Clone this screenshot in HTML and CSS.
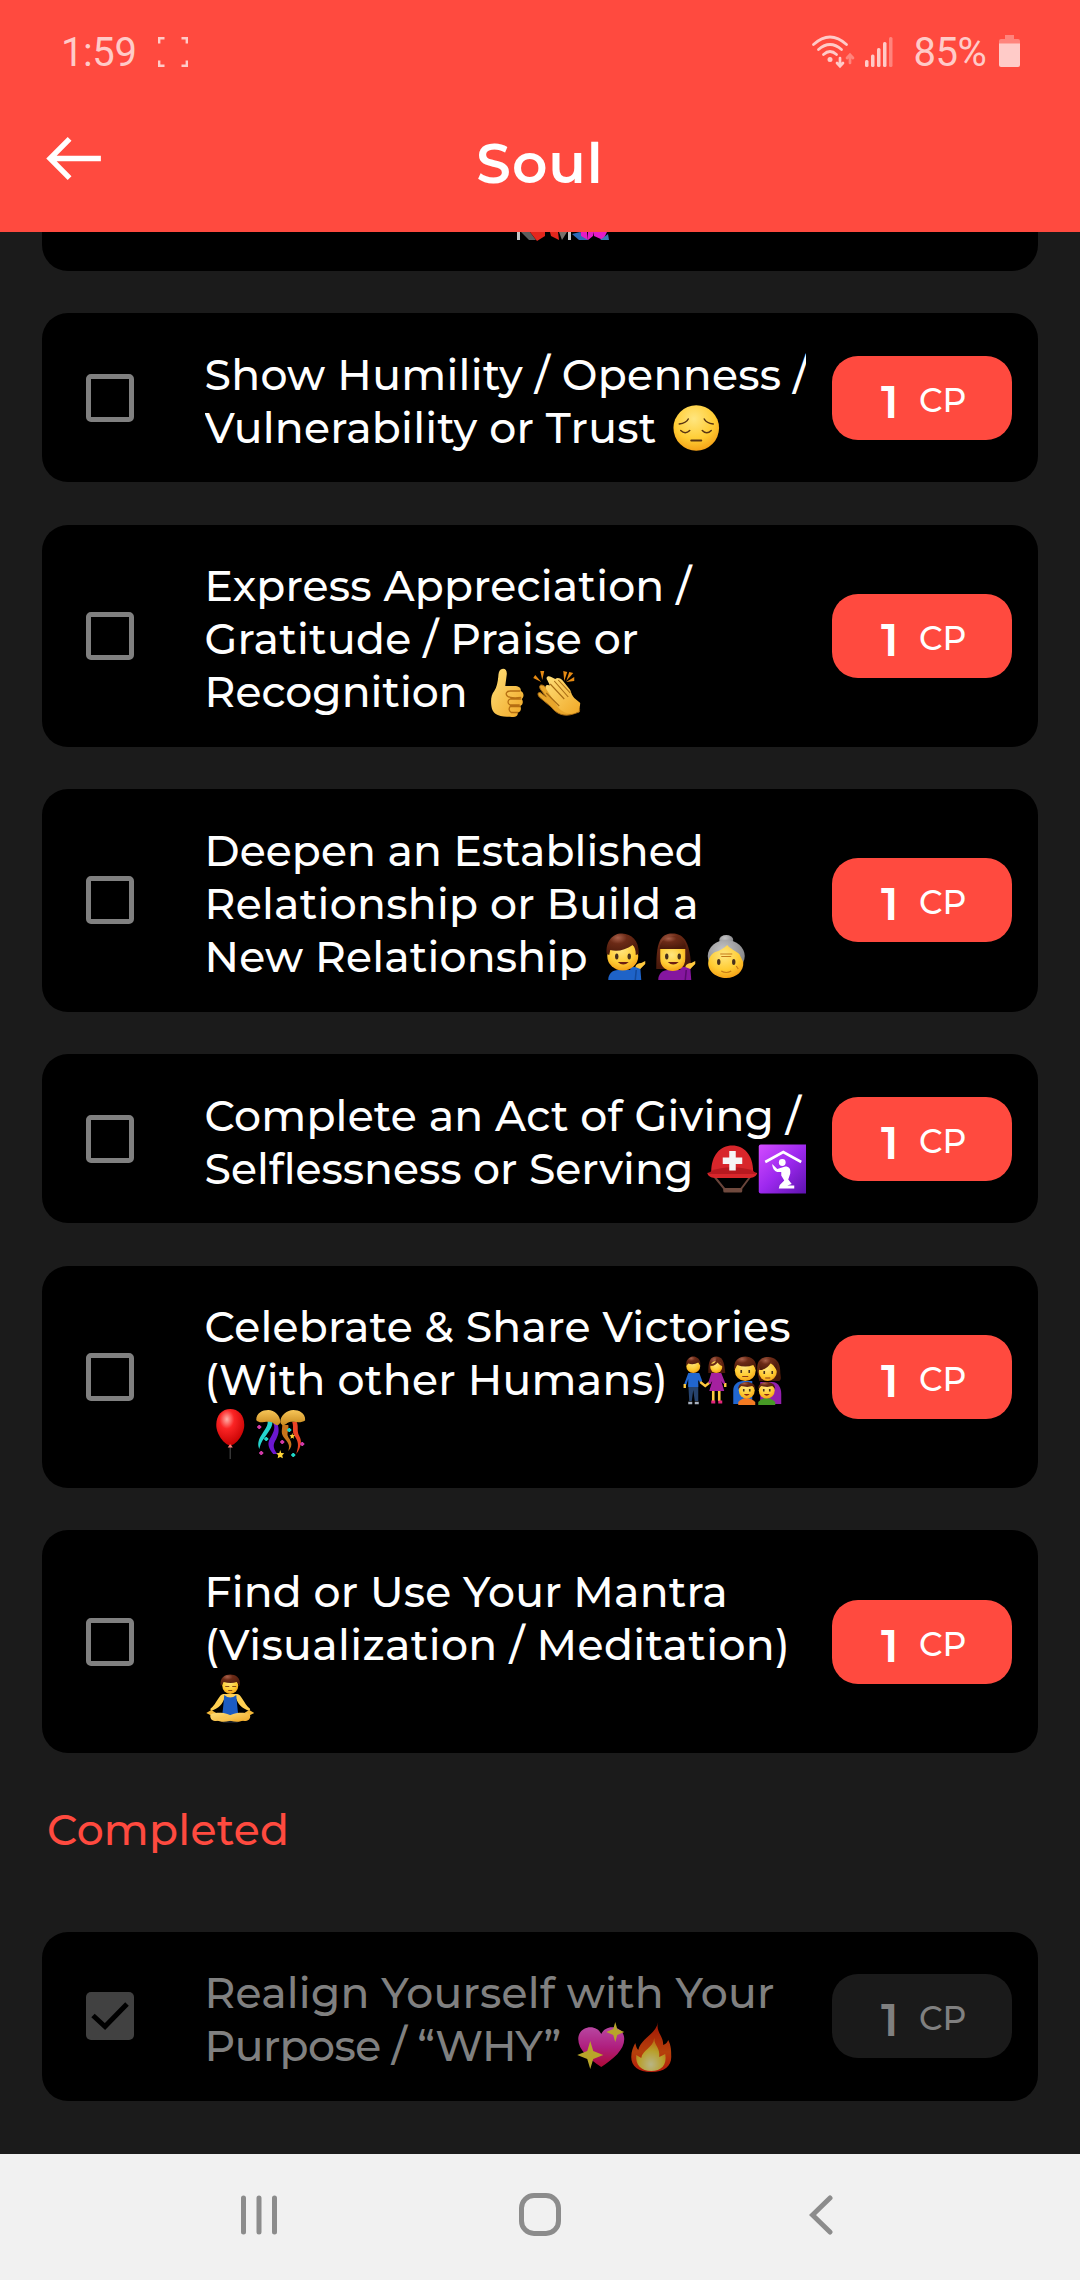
FILE: index.html
```html
<!DOCTYPE html>
<html lang="en">
<head>
<meta charset="utf-8">
<title>Soul</title>
<link rel="stylesheet" href="styles.css">
</head>
<body>
<svg class="defs" width="0" height="0" aria-hidden="true">
  <defs>
    <radialGradient id="skin" cx=".45" cy=".3" r=".75"><stop offset="0" stop-color="#ffe680"/><stop offset=".6" stop-color="#ffcc33"/><stop offset="1" stop-color="#f39a12"/></radialGradient>
    <linearGradient id="hand" x1="0" y1="0" x2="1" y2="1"><stop offset="0" stop-color="#ffdf7a"/><stop offset="1" stop-color="#f0a826"/></linearGradient>
    <radialGradient id="hair" cx=".35" cy=".2" r=".8"><stop offset="0" stop-color="#a9604a"/><stop offset=".35" stop-color="#6b2a16"/><stop offset="1" stop-color="#4a1a0b"/></radialGradient>
    <radialGradient id="gray" cx=".4" cy=".3" r=".8"><stop offset="0" stop-color="#c4c4c6"/><stop offset="1" stop-color="#77777a"/></radialGradient>
    <radialGradient id="balloon" cx=".38" cy=".28" r=".75"><stop offset="0" stop-color="#ffb0a8"/><stop offset=".35" stop-color="#fb2424"/><stop offset="1" stop-color="#c40000"/></radialGradient>
    <linearGradient id="purple" x1="0" y1="0" x2="1" y2="1"><stop offset="0" stop-color="#d34cff"/><stop offset=".5" stop-color="#9c28ee"/><stop offset="1" stop-color="#5b12ac"/></linearGradient>
    <linearGradient id="heart" x1="0" y1="0" x2="0" y2="1"><stop offset="0" stop-color="#ff62e0"/><stop offset=".5" stop-color="#f32bb0"/><stop offset="1" stop-color="#f00d4b"/></linearGradient>
    <linearGradient id="flame" x1="0" y1="0" x2="0" y2="1"><stop offset="0" stop-color="#e01c08"/><stop offset=".6" stop-color="#fb5a10"/><stop offset="1" stop-color="#ff2410"/></linearGradient>
    <radialGradient id="core" cx=".5" cy=".8" r=".7"><stop offset="0" stop-color="#fffbb8"/><stop offset=".6" stop-color="#ffdd3c"/><stop offset="1" stop-color="#ff9a1c"/></radialGradient>
    <linearGradient id="gold" x1="0" y1="0" x2="0" y2="1"><stop offset="0" stop-color="#f7c658"/><stop offset="1" stop-color="#c98a1e"/></linearGradient>
  </defs>

  <symbol id="e-pensive" viewBox="0 0 50 50">
    <circle cx="25" cy="25" r="22.8" fill="url(#skin)"/>
    <g fill="none" stroke="#5a3512" stroke-width="1.500" stroke-linecap="round"><path d="M8 21q7-1 9-5M42 21q-7-1-9-5M9.500 27.500q4.500 4.500 9 0M31 27.500q4.500 4.500 9 0"/><path d="M20 37.500h10" stroke-width="2"/></g>
  </symbol>

  <symbol id="e-thumb" viewBox="0 0 50 50">
    <path d="M18.500 1.500c4-2 6.500 1 6 5L23 18l9 0c5 0 7 2 6.500 5 3.500 1.500 3.500 6 1 8 2 2.500 1 6-1.500 7 1.500 3 .5 6-2.500 6.500.5 3.500-2 5-6 4.500-4-.5-10 0-14-2-4-1.500-6-5-6.500-10-.5-6 0-10 3-14 2.500-3.500 3.500-9 4-14 .3-3.500.5-6 2.500-7.500z" fill="url(#hand)"/>
    <path d="M38 23H28c-4 0-5 3-3 5s9 2 14 1.500M39 31H28c-3 1-3 5 0 6h9.500M38 38.500H28c-2 2-1 5 1 6h7" fill="none" stroke="#b56e12" stroke-width="1.300"/>
  </symbol>

  <symbol id="e-clap" viewBox="0 0 50 50">
    <g fill="#e68a13"><path d="M1 10l8 4-6-7zM8 3l2 9 2-9zM31 3l1 10 3-9zM37 4l-3 9 7-8zM42 9l-8 5 8-1z"/></g>
    <path d="M8 21c-2-4 1-5 4-3l7 6c-4-6-3-8 1-6l14 9 9 7c4 3 5 7 4 10l-6 2c-9 3-17 0-22-7L7 29c-3-4 0-6 3-3l4 3z" fill="#e9a62b" stroke="#a86c15" stroke-width="1"/>
    <path d="M15 12c-2-3 1-5 4-3l4 2c2-2 5-1 7 1l8 10c1 3 2 6 4 8l6 5c0 4-2 8-5 10-7 2-14-1-18-7L14 21c-2-4 1-5 4-3z" fill="url(#hand)"/>
    <path d="M18 16l14 15M22 13l14 16M26 12l12 13M14 25l13 13" fill="none" stroke="#a86c15" stroke-width="1.100"/>
  </symbol>

  <symbol id="e-man" viewBox="0 0 50 50">
    <path d="M6 48c0-6 4-10 10-10h12v-3h10l1 13z" fill="#1e63c8"/><path d="M34 38l-1 10" stroke="#134a9c" stroke-width="1.500"/>
    <ellipse cx="20.500" cy="24" rx="15.500" ry="14.500" fill="url(#skin)"/>
    <path d="M4.500 22C3 9 11 1 20 1.500S37 8 36.500 22l-3 1c0-5-1-8-3-10C23 18 15 20 8 18l-1 5z" fill="url(#hair)"/>
    <path d="M33 35c1-3 3-4 6-4l4-2v3l-5 5z" fill="#ffc93e"/>
    <ellipse cx="14.500" cy="24.500" rx="1.700" ry="3" fill="#47301c"/><ellipse cx="27" cy="24.500" rx="1.700" ry="3" fill="#47301c"/><path d="M15.500 30h11q-5.500 5-11 0z" fill="#6b1d12"/>
  </symbol>

  <symbol id="e-woman" viewBox="0 0 50 50">
    <path d="M4 37C4 12 7 1.500 20 1.500S38 12 39 37z" fill="url(#hair)"/>
    <path d="M6 48c0-6 4-10 10-10h12v-3h10l1 13z" fill="#85169f"/><path d="M34 38l-1 10" stroke="#5b0b70" stroke-width="1.500"/>
    <path d="M8 16h25v11c0 8-6 12-12.500 12S8 35 8 27z" fill="url(#skin)"/>
    <path d="M7 17C8 8 14 4 21 4s13 5 13 13z" fill="url(#hair)"/>
    <path d="M33 35c1-3 3-4 6-4l4-2v3l-5 5z" fill="#ffc93e"/>
    <ellipse cx="14.500" cy="24.500" rx="1.700" ry="3" fill="#47301c"/><ellipse cx="27" cy="24.500" rx="1.700" ry="3" fill="#47301c"/><path d="M15.500 30h11q-5.500 5-11 0z" fill="#6b1d12"/>
  </symbol>

  <symbol id="e-granny" viewBox="0 0 50 50">
    <ellipse cx="23" cy="8" rx="7" ry="5" fill="url(#gray)"/>
    <ellipse cx="23" cy="24" rx="18.500" ry="16" fill="url(#gray)"/>
    <path d="M5 30C6 25 8 22 12 20c4-1 9-4 12-7 3 4 9 6 12 9l4 8c1 9-7 16-17 16S4 39 5 30z" fill="url(#skin)"/>
    <ellipse cx="15.500" cy="30" rx="1.700" ry="3" fill="#47301c"/><ellipse cx="30.500" cy="30" rx="1.700" ry="3" fill="#47301c"/><path d="M18 39q5 3 10 0M17 22h12M18 24.500h10M33 34l2 3" fill="none" stroke="#c67b18" stroke-width="1.200"/>
  </symbol>

  <symbol id="e-helmet" viewBox="0 0 50 50">
    <path d="M5 30l13 16h15l12-16" fill="none" stroke="#69443a" stroke-width="2"/><rect x="16" y="44" width="19" height="4.500" rx="1.500" fill="#704a3e"/>
    <path d="M4 28C4 11 13 1.500 25 1.500S46 11 46 28l4 1c-1 4-5 5-9 5H9c-4 0-8-1-9-5z" fill="#d8262b"/><path d="M4 27c12-5 30-5 42 0l3 3H1z" fill="#b8191f"/>
    <path d="M22 7h6.500v6.500H35V20h-6.500v6.500H22V20h-6.500v-6.500H22z" fill="#f5f5f5"/>
  </symbol>

  <symbol id="e-worship" viewBox="0 0 50 50">
    <rect x=".5" y=".5" width="49" height="49" rx="2" fill="url(#purple)"/>
    <path d="M7 18L25 8l18 10" fill="none" stroke="#fff" stroke-width="2.600"/><circle cx="24" cy="18.500" r="3.400" fill="#fff"/>
    <path d="M14 20l5 5 8-2.500c4 0 5.500 2 5 7l-2 6 3.500 4.500-4.500 1.500 7 0v3H20.500l1-3.500 4.500-4.500-3-5 0-3.500-4 0c-3-1-5-4-5-8z" fill="#fff"/>
  </symbol>

  <symbol id="e-couple" viewBox="0 0 50 50">
    <path d="M6 28h10v17h-3.500l-1.500-11-1.500 11H7z" fill="#26436d"/><path d="M6 17h11l3 8-2 2-2-3v7H6v-8l-2 6-2-1z" fill="#2166cf"/><path d="M18 26l5 4 5-4" fill="none" stroke="#ffc93e" stroke-width="2.400"/>
    <path d="M2.500 28v4M43 27v4" stroke="#ffc93e" stroke-width="2.400"/>
    <circle cx="11" cy="10" r="7" fill="url(#skin)"/><path d="M4 10C3 3 8 .5 11 .5s8 2.500 7 9l-2-3q-5 3-10 1z" fill="url(#hair)"/>
    <path d="M26 17C26 5 28 .5 34 .5S42 5 43 17z" fill="url(#hair)"/><circle cx="34" cy="11" r="6" fill="url(#skin)"/><path d="M28 9q6 0 7-5 2 4 5 5" fill="none" stroke="#6b2a16" stroke-width="2"/>
    <path d="M29 17h10l4 10-2 1-2-3 3 10H27l3-10-2 3-2-1z" fill="#a5209f"/><path d="M31 35v10M37 35v10" stroke="#ffc93e" stroke-width="2.600"/><path d="M29 46h4M36 46h4" stroke="#e4257b" stroke-width="3"/>
    <path d="M6 47h4M12.500 47h4" stroke="#a9b2c0" stroke-width="2.500"/>
  </symbol>

  <symbol id="e-family" viewBox="0 0 50 50">
    <path d="M1 48V34c0-5 4-9 10-9h9v23z" fill="#2166cf"/><path d="M28 26h12c6 0 9 6 9 12v10H28z" fill="#941fae"/>
    <path d="M25 15C24 5 29 1 36 1s12 5 12 14c0 5 2 8-1 10H27z" fill="url(#hair)"/>
    <circle cx="13" cy="14.500" r="10.500" fill="url(#skin)"/><path d="M2 14C1 4 7 .5 13 .5S25 4 24 14l-3-5q-8 3-16 0z" fill="url(#hair)"/>
    <circle cx="35.500" cy="16" r="9" fill="url(#skin)"/><path d="M27 14q8 0 12-8l6 9V6L36 2l-9 4z" fill="url(#hair)"/>
    <path d="M6 49v-3q8-8 17 0v3z" fill="#f47b22"/><path d="M26 49v-3q8-8 17 0v3z" fill="#469a25"/>
    <circle cx="14.500" cy="34.500" r="8" fill="url(#skin)"/><circle cx="34.500" cy="34.500" r="8" fill="url(#skin)"/>
    <path d="M6 33c0-5 4-7 8.500-7s8.500 2 8.500 7l-3-3-5 1-6-1z" fill="url(#hair)"/><path d="M26 33c0-5 4-7 8.500-7s8.500 2 8.500 7l-3-3-5 1-6-1z" fill="url(#hair)"/>
    <path d="M11.500 38q3 3.500 6 0zM31.500 38q3 3.500 6 0z" fill="#8c2513"/>
    <path d="M9 14v3M17 14v3M32 15v3M40 15v3M11.500 33v2.500M17.500 33v2.500M31.500 33v2.500M37.500 33v2.500" stroke="#47301c" stroke-width="1.600"/><path d="M10 20.500h6M33 22h5" stroke="#8b3a17" stroke-width="1.200"/>
  </symbol>

  <symbol id="e-balloon" viewBox="0 0 50 50">
    <path d="M25 37v13" stroke="#353535" stroke-width="1.500"/><path d="M11 16C11 6 17 0 25 0s14 6 14 16c0 9-8 20-14 20.500C19 36 11 25 11 16z" fill="url(#balloon)"/><path d="M22.500 38.500l2-3h1l2 3z" fill="#ff7c78"/>
  </symbol>

  <symbol id="e-confetti" viewBox="0 0 50 50">
    <path d="M12 11c2 5-3 10-7 17-3 6-2 9-1 12 1-4 2-7 5-11 5-7 9-12 8-17z" fill="#25d4ce"/>
    <path d="M18 14c3 6-1 11-4 17-2 5 0 9 4 14h4c-5-7-4-10-1-15 3-6 3-10 1-16z" fill="#6b17cf"/>
    <path d="M27 16c0 5-2 8 2 13 4 5 6 7 4 13 6-6 2-11 0-14-2-4 1-7 0-12z" fill="#c7741a"/>
    <path d="M37 13c2 6-1 10 3 15 4 6 3 10 1 17 5-7 6-13 3-18-3-6 0-9-3-15z" fill="#ec4324"/>
    <path d="M1 11C1 4 7 1 13 1s12 5 12 12c-1 4-4 4-7 1-4-3-11 0-14-1q-3-1-3-2z" fill="url(#gold)"/><path d="M50 11C50 4 44 1 38 1S25 6 25 13c1 4 4 4 7 1 4-3 11 0 14-1q4-1 4-2z" fill="url(#gold)"/>
    <path d="M11 28v4M9 30h4M34 19v4M32 21h4M38 44v4M36 46h4" stroke="#1fd5c6" stroke-width="2"/><path d="M4 16v4M2 18h4M6 42v4M4 44h4M47 33v4M45 35h4M27 31v4M25 33h4" stroke="#d23aa8" stroke-width="2"/>
    <path d="M25 41l1 3 3 .3-2 2 .6 3-2.600-1.400-2.600 1.400.6-3-2-2 3-.3zM37 24l.7 2 2 .2-1.400 1.500.4 2-1.700-1-1.700 1 .4-2-1.400-1.500 2-.2z" fill="#ffd638"/>
  </symbol>

  <symbol id="e-lotus" viewBox="0 0 50 50">
    <path d="M16 47l9-5 9 5-2 2H18z" fill="#161c25"/><path d="M18 20h14c4 0 6 9 13 15l-1 2c-8-3-11-7-13-12H19C17 30 14 34 6 37l-1-2c7-6 9-15 13-15z" fill="#ffd052"/>
    <path d="M19 21q6 5 12 0l1 11 1 9H17l1-9z" fill="#1c5cc2"/>
    <path d="M1 39l5-3 5 3-5 2.500zM39 39l5-3 5 3-5 2.500z" fill="#f5b93a"/><path d="M5 42c0-4 12-4 17-2 4 1 6 3 9 4l8 2c-5 3-13 2-18-1l-10 2c-4 0-6-2-6-5z" fill="url(#hand)"/><path d="M45 42c0-4-12-4-17-2-4 1-6 3-9 4l-8 2c5 3 13 2 18-1l10 2c4 0 6-2 6-5z" fill="url(#hand)"/>
    <ellipse cx="25" cy="11.500" rx="8" ry="8.500" fill="url(#skin)"/><path d="M15.500 12C14 3 20 .5 25 .5S36 3 34.500 12l-3-4q-6 2-13 0z" fill="url(#hair)"/><path d="M20 12.500h4M27 12.500h4M23 16.500h4" stroke="#8b4a17" stroke-width="1"/>
  </symbol>

  <symbol id="e-heart" viewBox="0 0 50 50">
    <path d="M26 45C14 37 3 28 3 17 3 4 21 1 26 12 31 1 49 4 49 17c0 11-11 20-23 28z" fill="url(#heart)"/><path d="M15 19l3 10 10 4-10 4-3 10-3-10-10-4 10-4zM40 0l2 7 7 3-7 3-2 7-2-7-7-3 7-3z" fill="#ffe53b"/>
  </symbol>

  <symbol id="e-fire" viewBox="0 0 50 50">
    <path d="M33 0c-3 10 5 13 5 23 3-1 4-3 5-5 3 6 3 11 3 17 0 9-7 15-20 15S6 44 6 35c0-6 2-10 4-14 1 3 1 5 3 7C16 16 30 13 33 0z" fill="url(#flame)"/><path d="M29 16c0 8 6 9 5 19l6-3c2 11-4 17-14 17S10 43 11 33l5 3c1-8 12-10 13-20z" fill="url(#core)"/>
  </symbol>
</svg>

<div class="screen">
  <header class="header">
    <div class="status">
      <div class="status-group">
        <span class="status-text">1:59</span>
        <svg class="ic-scan" viewBox="0 0 30 30" fill="none" stroke="currentColor" stroke-width="2.400"><path d="M1.200 6.500V1.200h5.300M23.500 1.200h5.300v5.300M28.800 23.500v5.300h-5.300M6.500 28.800H1.200v-5.300"/></svg>
      </div>
      <div class="status-group">
        <svg class="ic-wifi" viewBox="0 0 43 34" fill="none" stroke="currentColor" stroke-width="2.700" stroke-linecap="round"><path d="M1.500 9.500q16.500-15 33 0M6.500 14.500q11.500-10 23 0M11.500 19.500q6.500-6 13 0"/><circle cx="18" cy="24.500" r="2.500" fill="currentColor" stroke="none"/><path d="M28 23v8M25 28l3 3.200 3-3.200"/><path class="dim" d="M38 28v-7M35 23l3-3.200 3 3.200"/></svg>
        <svg class="ic-signal" viewBox="0 0 28 30" fill="currentColor"><rect x="0" y="23" width="3.500" height="7" rx="1.500"/><rect x="6" y="17.500" width="3.500" height="12.500" rx="1.500"/><rect x="12" y="11" width="3.500" height="19" rx="1.500"/><rect x="18" y="5" width="3.500" height="25" rx="1.500"/><rect class="dim" x="24" y="0" width="3.500" height="30" rx="1.500"/></svg>
        <span class="status-text">85%</span>
        <svg class="ic-battery" viewBox="0 0 21 32" fill="currentColor"><path class="dim" d="M6 0h9v4h4q2 0 2 2v3H0V6q0-2 2-2h4z"/><path d="M0 8.500h21V30q0 2-2 2H2q-2 0-2-2z"/></svg>
      </div>
    </div>
    <div class="titlebar">
      <svg class="ic-back" viewBox="0 0 56 44" fill="none" stroke="#fff" stroke-width="5.500"><path d="M24 2L4 22l20 20M4 22h52"/></svg>
      <h1 class="title">Soul</h1>
    </div>
  </header>

  <main class="list">
    <section class="card card-cut">
      <svg class="boots" viewBox="0 0 94 9"><path d="M0 0h3v8H0zM51 0h3v8h-3z" fill="#c4c4c4"/><path d="M4 0h9l6 8h-7z" fill="#5d5d5d"/><path d="M13 0h15v4l-8 5zM33 0h8l1 8-8-4z" fill="#e3261c"/><path d="M42 0h8l-5 8z" fill="#77706a"/><path d="M55 2l8-2 8 8h-9z" fill="#2d6ab8"/><path d="M63 0h7v7zM64 0h6l1 8-7-4zM71 0h0v8l5-4V0zM76 0h14l-4 8-9-4z" fill="#e51bc6"/><path d="M83 8l8-6 1 6z" fill="#3c78b4"/></svg>
    </section>

    <section class="card">
      <span class="box"></span>
      <div class="label">
        <div class="line"><span class="t t1">Show Humility / Openness /</span></div>
        <div class="line"><span class="t t2">Vulnerability or Trust</span><svg class="emoji"><use href="#e-pensive"/></svg></div>
      </div>
      <div class="pill"><b>1</b><span>CP</span></div>
    </section>

    <section class="card">
      <span class="box"></span>
      <div class="label">
        <div class="line"><span class="t t3">Express Appreciation /</span></div>
        <div class="line"><span class="t t4">Gratitude / Praise or</span></div>
        <div class="line"><span class="t t5">Recognition</span><svg class="emoji"><use href="#e-thumb"/></svg><svg class="emoji"><use href="#e-clap"/></svg></div>
      </div>
      <div class="pill"><b>1</b><span>CP</span></div>
    </section>

    <section class="card">
      <span class="box"></span>
      <div class="label">
        <div class="line"><span class="t t6">Deepen an Established</span></div>
        <div class="line"><span class="t t7">Relationship or Build a</span></div>
        <div class="line"><span class="t t8">New Relationship</span><svg class="emoji"><use href="#e-man"/></svg><svg class="emoji"><use href="#e-woman"/></svg><svg class="emoji"><use href="#e-granny"/></svg></div>
      </div>
      <div class="pill"><b>1</b><span>CP</span></div>
    </section>

    <section class="card">
      <span class="box"></span>
      <div class="label">
        <div class="line"><span class="t t9">Complete an Act of Giving /</span></div>
        <div class="line"><span class="t t10">Selflessness or Serving</span><svg class="emoji"><use href="#e-helmet"/></svg><svg class="emoji"><use href="#e-worship"/></svg></div>
      </div>
      <div class="pill"><b>1</b><span>CP</span></div>
    </section>

    <section class="card">
      <span class="box"></span>
      <div class="label">
        <div class="line"><span class="t t11">Celebrate &amp; Share Victories</span></div>
        <div class="line"><span class="t t12">(With other Humans)</span><svg class="emoji"><use href="#e-couple"/></svg><svg class="emoji"><use href="#e-family"/></svg></div>
        <div class="line"><svg class="emoji"><use href="#e-balloon"/></svg><svg class="emoji"><use href="#e-confetti"/></svg></div>
      </div>
      <div class="pill"><b>1</b><span>CP</span></div>
    </section>

    <section class="card">
      <span class="box"></span>
      <div class="label">
        <div class="line"><span class="t t13">Find or Use Your Mantra</span></div>
        <div class="line"><span class="t t14">(Visualization / Meditation)</span></div>
        <div class="line"><svg class="emoji"><use href="#e-lotus"/></svg></div>
      </div>
      <div class="pill"><b>1</b><span>CP</span></div>
    </section>

    <h2 class="section-title">Completed</h2>

    <section class="card done">
      <svg class="checked" viewBox="0 0 48 48"><rect width="48" height="48" rx="5" fill="#414141"/><path d="M7 23.500l12 11L41 12" fill="none" stroke="#000" stroke-width="5"/></svg>
      <div class="label">
        <div class="line"><span class="t t15">Realign Yourself with Your</span></div>
        <div class="line"><span class="t t16">Purpose / “WHY”</span><svg class="emoji"><use href="#e-heart"/></svg><svg class="emoji"><use href="#e-fire"/></svg></div>
      </div>
      <div class="pill"><b>1</b><span>CP</span></div>
    </section>
  </main>

  <nav class="nav">
    <svg width="38" height="40" viewBox="0 0 38 40" fill="none" stroke="#8c8c8c" stroke-width="5" stroke-linecap="round"><path d="M3.500 3v34M19 3v34M34.500 3v34"/></svg>
    <svg width="42" height="43" viewBox="0 0 42 43" fill="none" stroke="#8c8c8c" stroke-width="5"><rect x="2.500" y="2.500" width="37" height="38" rx="12.500"/></svg>
    <svg width="24" height="40" viewBox="0 0 24 40" fill="none" stroke="#8c8c8c" stroke-width="5" stroke-linecap="round"><path d="M21 3L3.500 20 21 37"/></svg>
  </nav>
</div>
</body>
</html>
```

FILE: styles.css
```css
* { box-sizing: border-box; margin: 0; padding: 0; }
body { background: #1b1b1b; font-family: Montserrat, Inter, "Liberation Sans", sans-serif; color: #fff; }
svg { display: block; flex: none; }
.defs { position: absolute; }
.screen { width: 1080px; height: 2280px; display: flex; flex-direction: column; overflow: hidden; }

.header { height: 232px; flex: none; background: #ff4a3f; }
.status { height: 104px; padding: 0 60px 0 61px; display: flex; justify-content: space-between; align-items: center; color: #ffcbc8; }
.status-group { display: flex; align-items: center; }
.status-text { font: 400 40px/48px Roboto, sans-serif; letter-spacing: -0.400px; padding-top: 1px; }
.dim { opacity: .45; }
.ic-scan { width: 30px; height: 30px; margin-left: 21px; }
.ic-wifi { width: 43px; height: 34px; margin-right: 10px; }
.ic-signal { width: 28px; height: 30px; margin-right: 20px; }
.ic-battery { width: 21px; height: 32px; margin: -2px 0 0 12.500px; }
.titlebar { height: 128px; display: grid; grid-template-columns: 55px 1fr 55px; padding: 0 46px; }
.ic-back { width: 55px; height: 43px; margin-top: 33px; }
.title { font-size: 55px; line-height: 64px; font-weight: 600; text-align: center; margin-top: 28px; letter-spacing: 1px; }

.list { flex: 1; padding: 0 42px; display: flex; flex-direction: column; gap: 42.500px; }
.card { flex: none; background: #000; border-radius: 26px; padding: 35.600px 26px 27.600px 44px; display: grid; grid-template-columns: 48px 1fr 180px; align-items: center; }
.card-cut { height: 38.500px; padding: 0 0 0 475px; border-radius: 0 0 26px 26px; display: block; }
.boots { width: 94px; height: 9px; }
.box, .checked { width: 48px; height: 48px; margin-top: -8px; }
.box { border: 5.500px solid #808080; border-radius: 5px; }
.label { padding: 0 26px 0 70.500px; min-width: 0; font-size: 42.500px; font-weight: 500; line-height: 53px; }
.line { height: 53px; display: flex; align-items: center; white-space: nowrap; overflow: hidden; }
.t + .emoji { margin-left: 14px; }
.emoji { width: 50.500px; height: 50px; }

/* per-line tracking */
.t1 { letter-spacing: .3px; }
.t2, .t7, .t11 { letter-spacing: .26px; }
.t3, .t9, .t15 { letter-spacing: .2px; }
.t4, .t12 { letter-spacing: .29px; }
.t6 { letter-spacing: .07px; }
.t8, .t13 { letter-spacing: .17px; }
.t14 { letter-spacing: .37px; }
.t16 { letter-spacing: -.5px; }

.pill { height: 84px; margin-top: -8px; border-radius: 26px; background: #ff4a3f; display: flex; align-items: flex-start; padding-left: 49px; }
.pill b { font-size: 46px; line-height: 92px; font-weight: 600; width: 38px; }
.pill span { font-size: 33px; line-height: 89px; font-weight: 500; }
.section-title { color: #ff4a3f; font-size: 42.500px; font-weight: 500; line-height: 53px; margin: 9px 0 32px 5px; letter-spacing: .25px; }
.done { color: #808080; }
.done .emoji { opacity: .72; }
.done .pill { background: #1a1a1a; }

.nav { flex: none; height: 126px; background: #f1f1f1; padding: 0 119px 5px; display: grid; grid-template-columns: repeat(3, 1fr); align-items: center; justify-items: center; }
```
